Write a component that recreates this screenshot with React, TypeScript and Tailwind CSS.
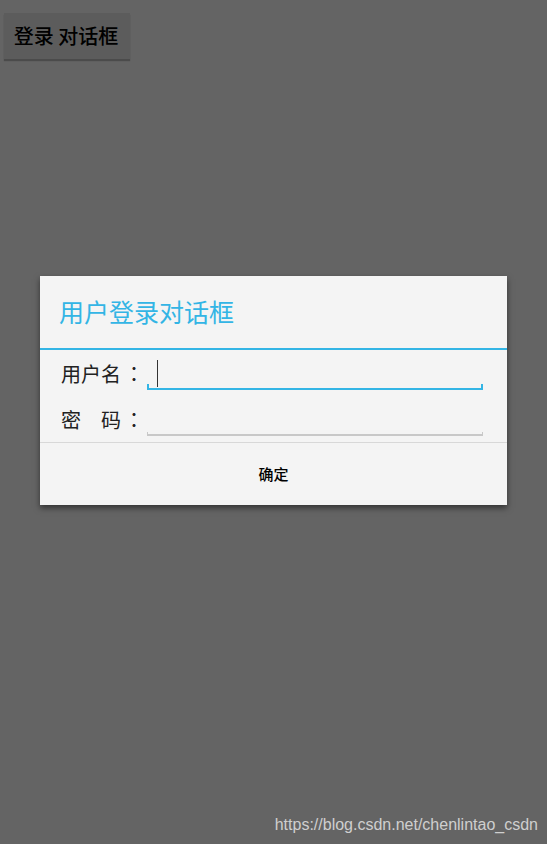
import React from "react";

const FONT = { fontFamily: '"Noto Sans CJK SC", "Liberation Sans", sans-serif' };

// 全角冒号居中显示（与 Android 原生字体一致）
function Colon() {
  return (
    <span className="pl-[3px]" style={{ fontFamily: '"Noto Sans CJK JP", sans-serif' }}>
      ：
    </span>
  );
}

export default function App() {
  return (
    <div className="relative h-[844px] w-[547px] overflow-hidden bg-[#646464]" style={FONT}>
      {/* 顶部按钮 */}
      <div className="pl-1 pt-[13px]">
        <button className="flex h-[46px] w-[126px] items-center justify-center bg-[#5c5c5c] pr-[2px] text-[20px] font-medium text-black shadow-[0_2px_1px_rgba(0,0,0,0.25)]">
          登录 对话框
        </button>
      </div>

      {/* 对话框 */}
      <div className="mx-[40px] mt-[217px] w-[467px] bg-[#f4f4f4] shadow-[0_3px_6px_rgba(0,0,0,0.5)]">
        <div className="flex h-[72px] items-center pl-[19px] text-[25px] text-[#33b5e5]">
          用户登录对话框
        </div>
        <div className="h-[2px] bg-[#33b5e5]" />

        <div className="px-[21px] pt-[8px] pb-[6px]">
          <div className="flex h-[32px] items-center">
            <span className="w-[86px] shrink-0 whitespace-pre text-[20px] text-[#222]">
              用户名<Colon />
            </span>
            <div className="flex flex-1 flex-col self-stretch pr-[3px]">
              <div className="relative flex-1">
                <div className="absolute left-[10px] top-[2px] h-[27px] w-px bg-[#333]" />
              </div>
              <div className="h-[6px] w-full border-b-2 border-l-2 border-r-2 border-[#33b5e5]" />
            </div>
          </div>
          <div className="mt-[14px] flex h-[32px] items-center">
            <span className="w-[86px] shrink-0 whitespace-pre text-[20px] text-[#222]">
              密　码<Colon />
            </span>
            <div className="flex flex-1 flex-col self-stretch pr-[3px]">
              <div className="flex-1" />
              <div className="h-[4px] w-full border-b-2 border-l border-r border-[#c8c8c8]" />
            </div>
          </div>
        </div>

        <div className="h-px bg-[#d8d8d8]" />
        <button className="flex h-[62px] w-full items-center justify-center text-[15px] font-medium text-black">
          确定
        </button>
      </div>

      {/* 水印 */}
      <div
        className="absolute right-[9px] bottom-[7px] text-[16px] text-[#cfcfcf]"
        style={{ fontFamily: '"Liberation Sans", Arial, sans-serif' }}
      >
        https://blog.csdn.net/chenlintao_csdn
      </div>
    </div>
  );
}
